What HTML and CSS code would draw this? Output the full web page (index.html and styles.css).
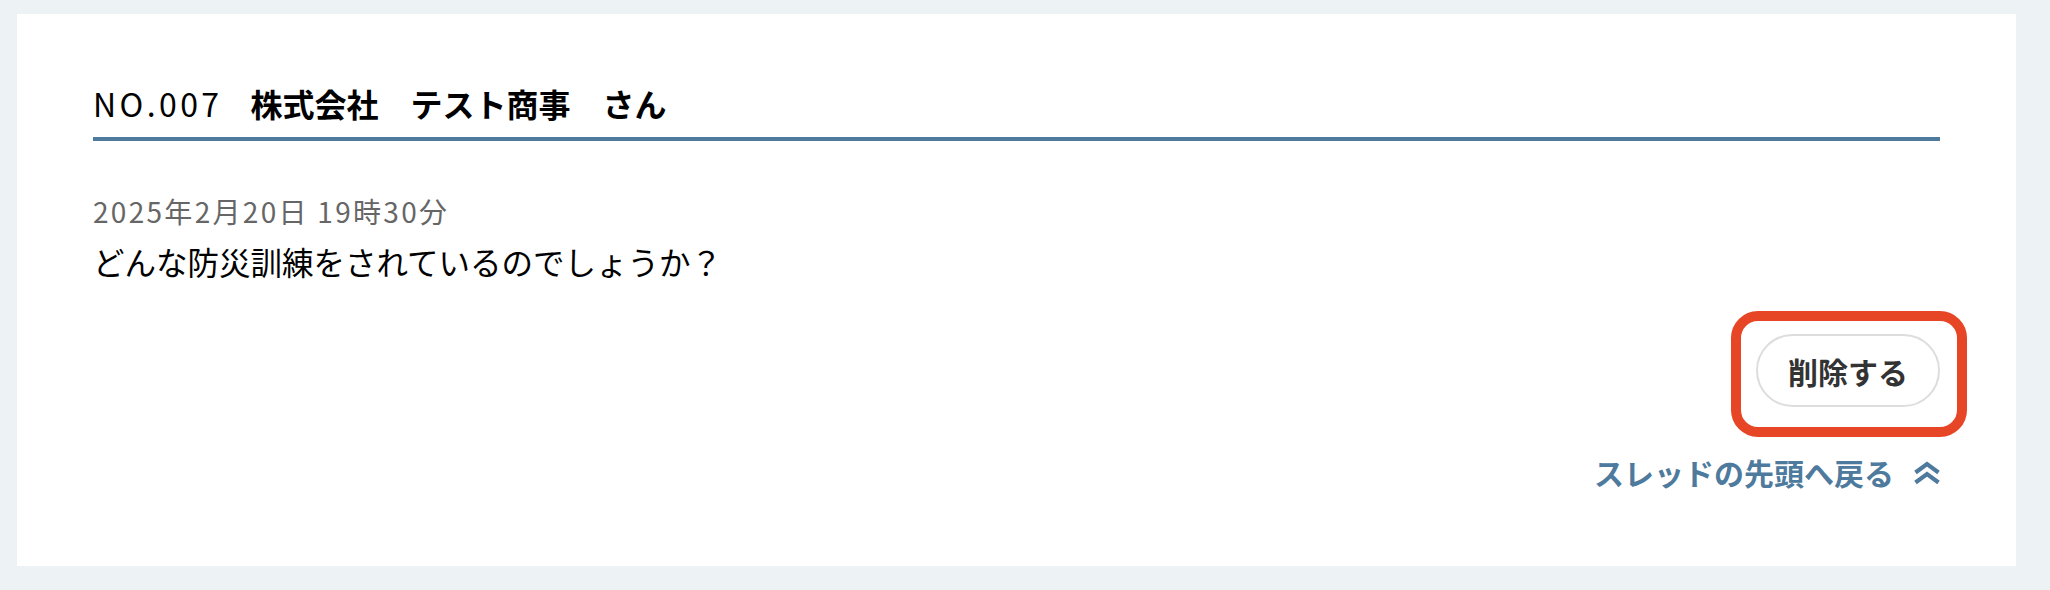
FILE: index.html
```html
<!DOCTYPE html>
<html lang="ja">
<head>
<meta charset="utf-8">
<link rel="stylesheet" href="styles.css">
</head>
<body>
<div class="card">
  <h2 class="title"><span class="no">NO.007</span><span class="name">株式会社　テスト商事　さん</span></h2>
  <div class="post">
    <p class="date">2025年2月20日 19時30分</p>
    <p class="body">どんな防災訓練をされているのでしょうか？</p>
  </div>
  <div class="actions">
    <div class="btn-wrap">
      <button class="btn">削除する</button>
      <span class="highlight"></span>
    </div>
  </div>
  <div class="back">
    <a class="back-link" href="#">スレッドの先頭へ戻る
      <svg class="chev" width="26" height="24" viewBox="0 0 26 24" fill="none" stroke="currentColor" stroke-width="4.2" stroke-linecap="butt" stroke-linejoin="miter"><path d="M1.5 11.5 L13 3 L24.5 11.5"/><path d="M1.5 21.5 L13 13 L24.5 21.5"/></svg>
    </a>
  </div>
</div>
</body>
</html>
```
FILE: styles.css
```css
* { box-sizing: border-box; }
html, body { margin: 0; }
body {
  background: #edf2f5;
  padding: 14px 34px 24px 17px;
  font-family: "Noto Sans CJK JP", "Noto Sans", sans-serif;
  color: #000;
}
.card {
  background: #fff;
  height: 552px;
  padding: 65px 76px 0 76px;
  display: flex;
  flex-direction: column;
}
.title {
  margin: 0;
  font-size: 32px;
  line-height: 48px;
  padding-bottom: 10px;
  border-bottom: 4px solid #4e7a9d;
  display: flex;
  gap: 28px;
}
.no { font-weight: 400; letter-spacing: 3.4px; }
.name { font-weight: 700; }
.post { margin-top: 50px; }
.date {
  margin: 0;
  font-size: 28px;
  line-height: 40px;
  letter-spacing: 2.3px;
  color: #666;
}
.body {
  margin: 8px 0 0;
  font-size: 31.5px;
  line-height: 44px;
}
.actions {
  display: flex;
  justify-content: flex-end;
  margin-top: 51px;
}
.btn-wrap { position: relative; }
.btn {
  font-family: inherit;
  font-size: 30px;
  font-weight: 700;
  color: #333;
  background: #fff;
  border: 2px solid #ddd;
  border-radius: 999px;
  width: 184px;
  height: 73px;
  padding: 0;
  line-height: 1;
  display: block;
}
.highlight {
  position: absolute;
  left: -25px;
  top: -23px;
  right: -27px;
  bottom: -30px;
  border: 10px solid #e64626;
  border-radius: 27px;
  pointer-events: none;
}
.back {
  display: flex;
  justify-content: flex-end;
  margin-top: 45px;
}
.back-link {
  color: #4e7a9d;
  font-weight: 700;
  font-size: 30px;
  line-height: 40px;
  text-decoration: none;
  display: flex;
  align-items: center;
  gap: 20px;
}
.chev { display: block; margin-top: 2px; }
```
